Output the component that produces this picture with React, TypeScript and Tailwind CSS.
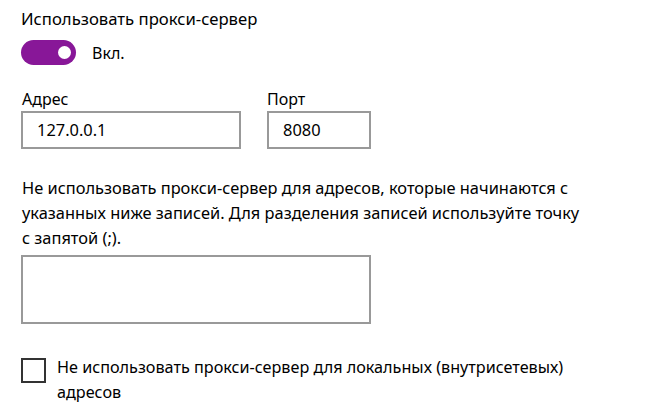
import React from 'react';

const ProxySettings: React.FC = () => {
  return (
    <div className="w-[651px] h-[418px] bg-white pl-[21px] pt-[6px] text-black font-['Noto_Sans',sans-serif] text-[16px]">
      <div className="h-[25px] leading-[25px] text-[16.7px]">Использовать прокси-сервер</div>

      {/* toggle */}
      <div className="mt-[9px] flex items-center h-[25px]">
        <div className="w-[55px] h-[25px] rounded-full bg-[#881798] flex items-center justify-end pr-[5px]">
          <div className="w-[13px] h-[13px] rounded-full bg-white" />
        </div>
        <span className="ml-[16px]">Вкл.</span>
      </div>

      <div className="mt-[22px] flex gap-[26px]">
        <div>
          <div className="h-[24px] leading-[24px] pl-[1px]">Адрес</div>
          <div className="w-[220px] h-[38px] border-2 border-[#999999] pl-[14px] flex items-center text-[16.4px]">127.0.0.1</div>
        </div>
        <div>
          <div className="h-[24px] leading-[24px]">Порт</div>
          <div className="w-[104px] h-[38px] border-2 border-[#999999] pl-[14px] flex items-center text-[16.4px]">8080</div>
        </div>
      </div>

      <p className="mt-[26px] leading-[25px] whitespace-nowrap pl-[1px] text-[16.4px]">
        Не использовать прокси-сервер для адресов, которые начинаются с
        <br />
        указанных ниже записей. Для разделения записей используйте точку
        <br />
        с запятой (;).
      </p>

      <div className="mt-[5px] w-[350px] h-[69px] border-2 border-[#999999]" />

      <div className="mt-[34px] flex items-start">
        <div className="w-[25px] h-[25px] border-2 border-[#333333] shrink-0" />
        <div className="ml-[11px] -mt-[3px] leading-[25px] whitespace-nowrap text-[16.2px]">
          Не использовать прокси-сервер для локальных (внутрисетевых)
          <br />
          адресов
        </div>
      </div>
    </div>
  );
};

export default function App() {
  return <ProxySettings />;
}
